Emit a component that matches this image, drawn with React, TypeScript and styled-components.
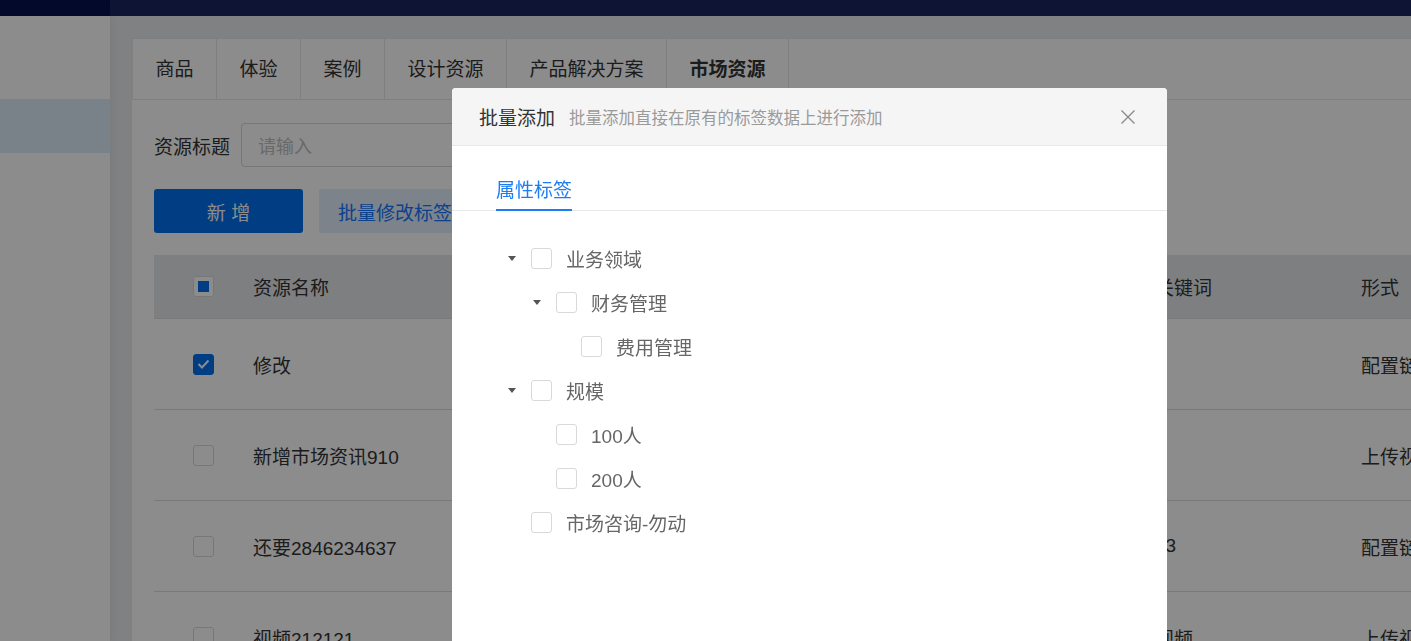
import React from 'react';
import styled, { createGlobalStyle } from 'styled-components';

const GlobalStyle = createGlobalStyle`
  html, body { margin: 0; padding: 0; }
  body {
    font-family: "Liberation Sans", "Noto Sans CJK SC", sans-serif;
    width: 1411px;
    height: 641px;
    overflow: hidden;
    background: #eaebee;
  }
  * { box-sizing: border-box; }
`;

const Page = styled.div`
  display: flex;
  flex-direction: column;
  width: 1411px;
  height: 641px;
  overflow: hidden;
`;

const TopBar = styled.header`
  display: flex;
  height: 16px;
  flex-shrink: 0;
`;

const TopBarLogo = styled.div`
  width: 110px;
  background: #05124e;
`;

const TopBarRest = styled.div`
  flex: 1;
  background: #192660;
`;

const Body = styled.div`
  display: flex;
  flex: 1;
  min-height: 0;
`;

const Sidebar = styled.aside`
  width: 110px;
  flex-shrink: 0;
  background: #ffffff;
  padding-top: 83px;
  box-shadow: 2px 0 8px rgba(0, 0, 0, 0.06);
  position: relative;
  z-index: 1;
`;

const SideItem = styled.div<{ $active?: boolean }>`
  height: 54px;
  background: ${(p) => (p.$active ? '#dcedfa' : 'transparent')};
`;

const Main = styled.main`
  flex: 1;
  min-width: 0;
  padding: 22px 0 0 22px;
  overflow: hidden;
`;

const Card = styled.section`
  width: 1400px;
  background: #ffffff;
  min-height: 700px;
`;

const TabsBar = styled.nav`
  display: flex;
  height: 62px;
  border-top: 1px solid #e8e8e8;
  border-left: 1px solid #e8e8e8;
  border-bottom: 1px solid #e8e8e8;
`;

const PageTab = styled.div<{ $active?: boolean }>`
  padding: 0 22.5px;
  border-right: 1px solid #e8e8e8;
  font-size: 19px;
  line-height: 61px;
  color: #333;
  font-weight: ${(p) => (p.$active ? 700 : 400)};
  white-space: nowrap;
`;

const Content = styled.div`
  padding: 23px 22px 0 22px;
`;

const FormRow = styled.div`
  display: flex;
  align-items: center;
  gap: 11px;
`;

const Label = styled.span`
  font-size: 19px;
  color: #333;
`;

const Input = styled.div`
  width: 420px;
  height: 44px;
  border: 1px solid #d9d9d9;
  border-radius: 4px;
  padding: 0 16px;
  display: flex;
  align-items: center;
  font-size: 18px;
  color: #bfbfbf;
`;

const ButtonRow = styled.div`
  display: flex;
  gap: 16px;
  margin-top: 22px;
`;

const Button = styled.button<{ $primary?: boolean }>`
  height: 44px;
  border: none;
  border-radius: 3px;
  font-family: inherit;
  font-size: 19px;
  padding: 0 19px;
  min-width: ${(p) => (p.$primary ? '149px' : 'auto')};
  background: ${(p) => (p.$primary ? '#0070ee' : '#e3eefc')};
  color: ${(p) => (p.$primary ? '#ffffff' : '#1677ff')};
  white-space: pre;
`;

const Table = styled.div`
  margin-top: 22px;
`;

const cols = '79px 380px 280px 242px 206px 300px';

const HeadRow = styled.div`
  display: grid;
  grid-template-columns: ${cols};
  height: 64px;
  background: #e6e8eb;
  border-bottom: 1px solid #dcdcdc;
  align-items: center;
`;

const Row = styled.div`
  display: grid;
  grid-template-columns: ${cols};
  height: 91px;
  border-bottom: 1px solid #dcdcdc;
  align-items: center;
`;

const Cell = styled.div<{ $check?: boolean }>`
  padding-left: ${(p) => (p.$check ? '39px' : '20px')};
  font-size: 19px;
  color: #333;
  white-space: nowrap;
  overflow: hidden;
  display: flex;
  align-items: center;
`;

const Box = styled.span<{ $checked?: boolean }>`
  width: 21px;
  height: 21px;
  border-radius: 3px;
  border: 1px solid ${(p) => (p.$checked ? '#0070ee' : '#d9d9d9')};
  background: ${(p) => (p.$checked ? '#0070ee' : '#ffffff')};
  display: inline-flex;
  align-items: center;
  justify-content: center;
  flex-shrink: 0;
`;

const Indeterminate = styled.span`
  width: 11px;
  height: 11px;
  background: #0070ee;
`;

const Overlay = styled.div`
  position: fixed;
  inset: 0;
  background: rgba(0, 0, 0, 0.45);
  z-index: 10;
`;

const Modal = styled.div`
  position: fixed;
  left: 452px;
  top: 88px;
  width: 715px;
  height: 620px;
  background: #ffffff;
  border-radius: 4px 4px 0 0;
  z-index: 11;
  display: flex;
  flex-direction: column;
  overflow: hidden;
`;

const ModalHeader = styled.div`
  height: 58px;
  flex-shrink: 0;
  background: #f5f5f5;
  border-bottom: 1px solid #e8e8e8;
  display: flex;
  align-items: center;
  padding: 0 31px 0 27px;
`;

const ModalTitle = styled.span`
  font-size: 19px;
  color: #333;
`;

const ModalSub = styled.span`
  font-size: 16.5px;
  color: #9a9a9a;
  margin-left: 14px;
`;

const CloseBtn = styled.span`
  margin-left: auto;
  display: flex;
  width: 16px;
  height: 16px;
`;

const ModalTabs = styled.div`
  display: flex;
  padding: 0 44px;
  border-bottom: 1px solid #e8e8e8;
`;

const ModalTab = styled.div`
  margin-top: 27px;
  margin-bottom: -1px;
  font-size: 19px;
  line-height: 36px;
  color: #1b7cf5;
  border-bottom: 2px solid #1b7cf5;
`;

const Tree = styled.div`
  padding: 25px 0 0 48px;
`;

const TreeRow = styled.div<{ $level: number }>`
  display: flex;
  align-items: center;
  height: 44px;
  padding-left: ${(p) => p.$level * 25}px;
`;

const Switcher = styled.span`
  width: 24px;
  display: flex;
  justify-content: center;
  align-items: center;
`;

const Caret = styled.span`
  width: 0;
  height: 0;
  border-left: 4.5px solid transparent;
  border-right: 4.5px solid transparent;
  border-top: 5px solid #555;
`;

const TreeBox = styled(Box)`
  margin-left: 7px;
`;

const TreeLabel = styled.span`
  margin-left: 14px;
  font-size: 19px;
  color: #666;
`;

const treeData = [
  { level: 0, caret: true, label: '业务领域' },
  { level: 1, caret: true, label: '财务管理' },
  { level: 2, caret: false, label: '费用管理' },
  { level: 0, caret: true, label: '规模' },
  { level: 1, caret: false, label: '100人' },
  { level: 1, caret: false, label: '200人' },
  { level: 0, caret: false, label: '市场咨询-勿动' },
];

const rows = [
  { checked: true, name: '修改', type: '市场资讯', tag: '财务管理', kw: '', form: '配置链接' },
  { checked: false, name: '新增市场资讯910', type: '市场资讯', tag: '规模', kw: '', form: '上传视频' },
  { checked: false, name: '还要2846234637', type: '市场资讯', tag: '业务领域', kw: '23', form: '配置链接' },
  { checked: false, name: '视频212121', type: '视频', tag: '规模', kw: '视频', form: '上传视频' },
];

const Check = () => (
  <svg width="13" height="10" viewBox="0 0 13 10">
    <polyline points="1.5,5 5,8.5 11.5,1.5" fill="none" stroke="#fff" strokeWidth="2" />
  </svg>
);

export default function App() {
  return (
    <>
      <GlobalStyle />
      <Page>
        <TopBar>
          <TopBarLogo />
          <TopBarRest />
        </TopBar>
        <Body>
          <Sidebar>
            <SideItem $active />
          </Sidebar>
          <Main>
            <Card>
              <TabsBar>
                <PageTab>商品</PageTab>
                <PageTab>体验</PageTab>
                <PageTab>案例</PageTab>
                <PageTab>设计资源</PageTab>
                <PageTab>产品解决方案</PageTab>
                <PageTab $active>市场资源</PageTab>
              </TabsBar>
              <Content>
                <FormRow>
                  <Label>资源标题</Label>
                  <Input>请输入</Input>
                </FormRow>
                <ButtonRow>
                  <Button $primary>{'新 增'}</Button>
                  <Button>批量修改标签</Button>
                </ButtonRow>
                <Table>
                  <HeadRow>
                    <Cell $check>
                      <Box>
                        <Indeterminate />
                      </Box>
                    </Cell>
                    <Cell>资源名称</Cell>
                    <Cell>资源类型</Cell>
                    <Cell>标签</Cell>
                    <Cell>关键词</Cell>
                    <Cell>形式</Cell>
                  </HeadRow>
                  {rows.map((r) => (
                    <Row key={r.name}>
                      <Cell $check>
                        <Box $checked={r.checked}>{r.checked && <Check />}</Box>
                      </Cell>
                      <Cell>{r.name}</Cell>
                      <Cell>{r.type}</Cell>
                      <Cell>{r.tag}</Cell>
                      <Cell>{r.kw}</Cell>
                      <Cell>{r.form}</Cell>
                    </Row>
                  ))}
                </Table>
              </Content>
            </Card>
          </Main>
        </Body>
      </Page>
      <Overlay />
      <Modal>
        <ModalHeader>
          <ModalTitle>批量添加</ModalTitle>
          <ModalSub>批量添加直接在原有的标签数据上进行添加</ModalSub>
          <CloseBtn>
            <svg width="16" height="16" viewBox="0 0 16 16">
              <path d="M1.5 1.5 L14.5 14.5 M14.5 1.5 L1.5 14.5" stroke="#8c8c8c" strokeWidth="1.4" fill="none" />
            </svg>
          </CloseBtn>
        </ModalHeader>
        <ModalTabs>
          <ModalTab>属性标签</ModalTab>
        </ModalTabs>
        <Tree>
          {treeData.map((n) => (
            <TreeRow key={n.label} $level={n.level}>
              <Switcher>{n.caret && <Caret />}</Switcher>
              <TreeBox />
              <TreeLabel>{n.label}</TreeLabel>
            </TreeRow>
          ))}
        </Tree>
      </Modal>
    </>
  );
}
